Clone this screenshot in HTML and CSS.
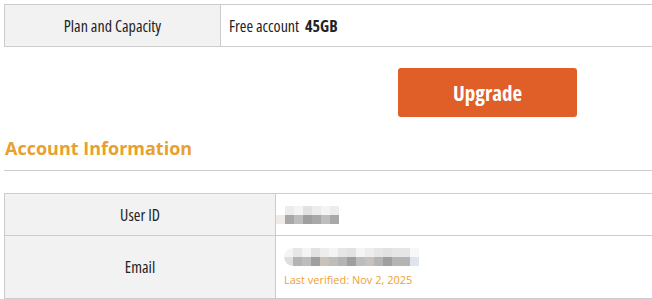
FILE: index.html
```html
<!DOCTYPE html>
<html lang="en">
<head>
  <meta charset="UTF-8">
  <title>Account</title>
  <link rel="stylesheet" href="styles.css">
</head>
<body>
  <div class="page">
    <table class="info-table plan-table">
      <tr>
        <th>Plan and Capacity</th>
        <td>Free account <b class="capacity">45GB</b></td>
      </tr>
    </table>

    <div class="actions">
      <button class="upgrade">Upgrade</button>
    </div>

    <h2 class="section-title">Account Information</h2>

    <table class="info-table account-table">
      <tr class="row-id">
        <th>User ID</th>
        <td>
          <div class="masked masked-id">
            <span></span><span></span><span></span><span></span><span></span><span></span><span></span>
          </div>
        </td>
      </tr>
      <tr class="row-email">
        <th>Email</th>
        <td>
          <div class="masked masked-email">
            <span></span><span></span><span></span><span></span><span></span><span></span><span></span><span></span><span></span><span></span><span></span><span></span><span></span><span></span><span></span>
          </div>
          <div class="verified">Last verified: Nov 2, 2025</div>
        </td>
      </tr>
    </table>
  </div>
</body>
</html>
```

FILE: styles.css
```css
/* Basic page reset */
body {
  margin: 0;
  overflow: hidden;
  background: #ffffff;
  font-family: "Open Sans", sans-serif;
  font-stretch: 75%;
  color: #222222;
}

.page {
  padding: 4px 0 0 4px;
}

/* Shared table look */
.info-table {
  width: 100%;
  border-collapse: collapse;
  font-size: 16px;
}
.info-table th,
.info-table td {
  padding: 0;
  border: 1px solid #cccccc;
  text-align: left;
  font-weight: normal;
}
.info-table td {
  padding-left: 8px;
  border-right: none;
}
.info-table th {
  background-color: #f2f2f2;
  text-align: center;
}

.plan-table th {
  width: 215px;
  height: 41px;
}
.capacity {
  margin-left: 3px;
  font-weight: bold;
}

/* Upgrade button */
.actions {
  padding: 21px 0 0 394px;
}
.upgrade {
  width: 179px;
  height: 49px;
  border: none;
  border-radius: 3px;
  background-color: #e05e28;
  color: #ffffff;
  font-family: inherit;
  font-stretch: 75%;
  font-size: 21px;
  font-weight: bold;
  cursor: pointer;
}

/* Section heading */
.section-title {
  margin: 19px 0 0;
  padding: 0 0 10px 1px;
  border-bottom: 1px solid #cccccc;
  color: #e8a02e;
  font-size: 18px;
  font-stretch: 100%;
  font-weight: bold;
}

.account-table {
  margin-top: 22px;
}
.account-table th {
  width: 270px;
}
.row-id th,
.row-id td {
  height: 41px;
}
.row-email th,
.row-email td {
  height: 62px;
}

/* Pixelated, blurred personal data */
.masked {
  display: flex;
  filter: blur(0.6px);
}
.masked span {
  width: 9px;
  height: 18px;
  background: linear-gradient(#ececec 50%, #a8a8a8 50%);
}
.masked span:nth-child(3n) {
  background: linear-gradient(#f4f4f4 50%, #bdbdbd 50%);
}
.masked span:nth-child(4n) {
  background: linear-gradient(#e2e2e2 50%, #9f9f9f 50%);
}
.masked-id {
  margin-left: -8px;
}
.masked-id span:first-child {
  background: linear-gradient(#ffffff 50%, #f0ebe8 50%);
}
.masked-email span {
  background: linear-gradient(#e6e6e6 50%, #b4b4b4 50%);
}
.masked-email span:nth-child(5n) {
  background: linear-gradient(#ededed 50%, #c8c2bb 50%);
}
.masked-email span:last-child {
  background: linear-gradient(#f6f8fa 50%, #dfe5ef 50%);
}
.masked-email span:first-child {
  border-radius: 9px 0 0 9px;
  background: linear-gradient(#f4f4f4 50%, #dedede 50%);
}

.verified {
  margin-top: 6px;
  color: #f0a033;
  font-size: 11px;
  font-stretch: 100%;
}
```
